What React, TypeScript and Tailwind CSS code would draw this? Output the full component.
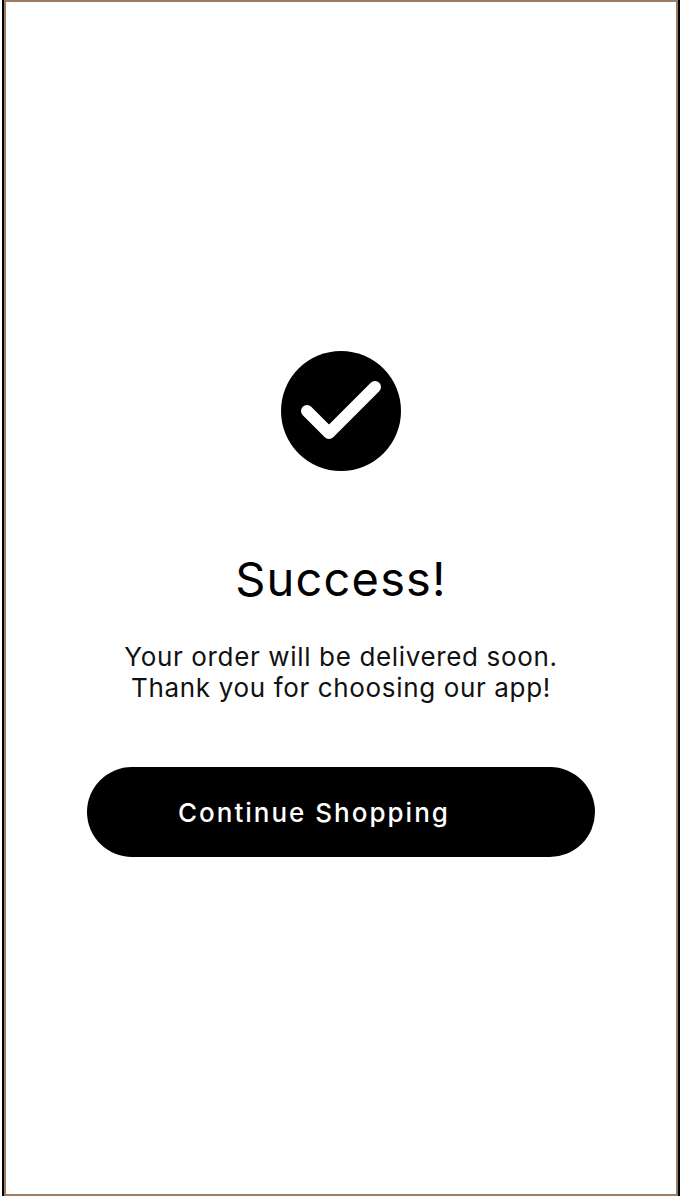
const CheckBadge = () => {
    return (
        <svg viewBox="0 0 120 120" className="w-[120px] h-[120px]" role="img" aria-label="Order placed">
            <circle cx="60" cy="60" r="60" fill="#000" />
            <path
                d="M26 60 L48 82 L94 36"
                fill="none"
                stroke="#fff"
                strokeWidth="12"
                strokeLinecap="round"
                strokeLinejoin="round"
            />
        </svg>
    );
};

const OrderSuccess = () => {
    return (
        <div className="min-h-screen flex pl-0.5 bg-white font-['Inter',sans-serif] text-black">
            <div className="flex-1 flex border-x-2 border-black">
                <main className="flex-1 flex flex-col items-center justify-center pt-3 px-[81px] border-2 border-[#9b7c65]">
                    <CheckBadge />
                    <h1 className="mt-20 text-[47px] leading-[56px] tracking-wide">Success!</h1>
                    <p className="mt-[34px] text-[26px] leading-[31px] tracking-wide text-center text-[#111111]">
                        Your order will be delivered soon.<br />
                        Thank you for choosing our app!
                    </p>
                    <button
                        type="button"
                        className="mt-16 w-full h-[90px] px-[91px] rounded-full bg-black text-left text-[26px] leading-[31px] font-medium tracking-[2px] text-white cursor-pointer"
                    >
                        Continue Shopping
                    </button>
                </main>
            </div>
        </div>
    );
};

export default OrderSuccess;
